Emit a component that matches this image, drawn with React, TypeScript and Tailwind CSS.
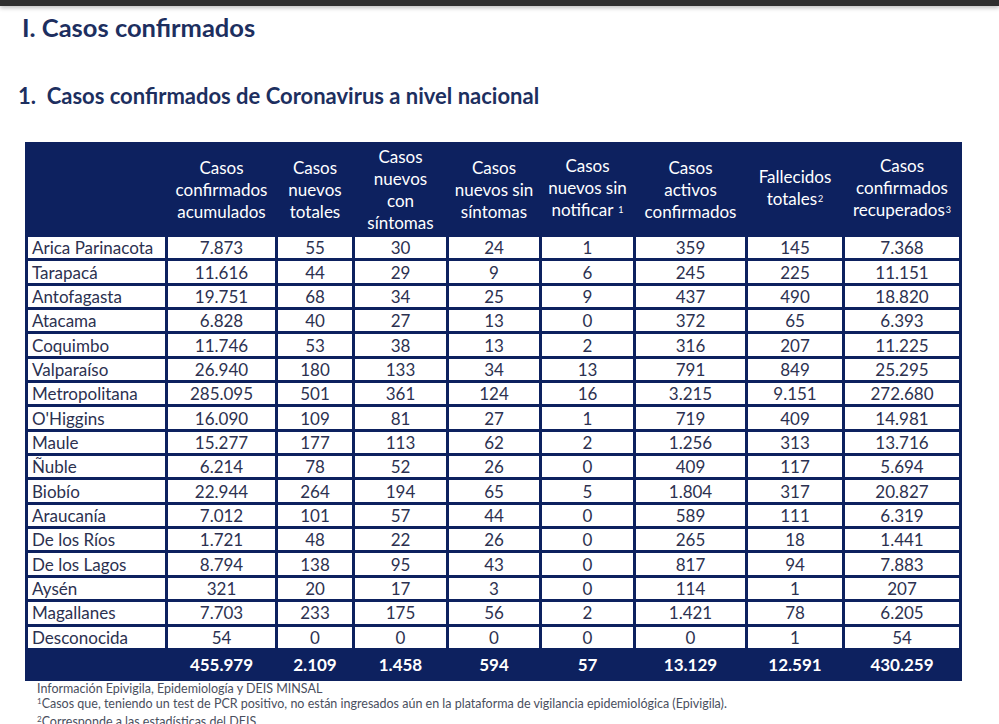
import React from "react";

const rows: [string, string[]][] = [
  ["Arica Parinacota", ["7.873", "55", "30", "24", "1", "359", "145", "7.368"]],
  ["Tarapacá", ["11.616", "44", "29", "9", "6", "245", "225", "11.151"]],
  ["Antofagasta", ["19.751", "68", "34", "25", "9", "437", "490", "18.820"]],
  ["Atacama", ["6.828", "40", "27", "13", "0", "372", "65", "6.393"]],
  ["Coquimbo", ["11.746", "53", "38", "13", "2", "316", "207", "11.225"]],
  ["Valparaíso", ["26.940", "180", "133", "34", "13", "791", "849", "25.295"]],
  ["Metropolitana", ["285.095", "501", "361", "124", "16", "3.215", "9.151", "272.680"]],
  ["O'Higgins", ["16.090", "109", "81", "27", "1", "719", "409", "14.981"]],
  ["Maule", ["15.277", "177", "113", "62", "2", "1.256", "313", "13.716"]],
  ["Ñuble", ["6.214", "78", "52", "26", "0", "409", "117", "5.694"]],
  ["Biobío", ["22.944", "264", "194", "65", "5", "1.804", "317", "20.827"]],
  ["Araucanía", ["7.012", "101", "57", "44", "0", "589", "111", "6.319"]],
  ["De los Ríos", ["1.721", "48", "22", "26", "0", "265", "18", "1.441"]],
  ["De los Lagos", ["8.794", "138", "95", "43", "0", "817", "94", "7.883"]],
  ["Aysén", ["321", "20", "17", "3", "0", "114", "1", "207"]],
  ["Magallanes", ["7.703", "233", "175", "56", "2", "1.421", "78", "6.205"]],
  ["Desconocida", ["54", "0", "0", "0", "0", "0", "1", "54"]],
];

const totals = ["455.979", "2.109", "1.458", "594", "57", "13.129", "12.591", "430.259"];

const Sup = ({ c }: { c: string }) => (
  <span className="text-[9px] relative -top-[3px] ml-[1px]">{c}</span>
);

const headers: React.ReactNode[][] = [
  ["Casos", "confirmados", "acumulados"],
  ["Casos", "nuevos", "totales"],
  ["Casos", "nuevos", "con", "síntomas"],
  ["Casos", "nuevos sin", "síntomas"],
  ["Casos", "nuevos sin", <>notificar <Sup c="1" /></>],
  ["Casos", "activos", "confirmados"],
  ["Fallecidos", <>totales<Sup c="2" /></>],
  ["Casos", "confirmados", <>recuperados<Sup c="3" /></>],
];

export default function App() {
  return (
    <div
      className="w-[999px] h-[724px] overflow-hidden bg-white relative"
      style={{ fontFamily: "Lato, 'Open Sans', sans-serif" }}
    >
      <div className="h-[6px] bg-[#2f2f2f] shadow-[0_2px_4px_rgba(0,0,0,0.25)]" />
      <div className="pl-[22px] pt-[6px] text-[25.5px] leading-[30px] font-bold text-[#1d2f5f]">
        I. Casos confirmados
      </div>
      <div className="pl-[18px] mt-[41px] text-[22px] leading-[26px] font-bold text-[#1d2f5f] whitespace-pre">
        1.  Casos confirmados de Coronavirus a nivel nacional
      </div>
      <div className="ml-[25px] mt-[33px] w-[937px] bg-[#0d215f] p-[3px] grid gap-[3px] grid-cols-[137px_107px_74px_91px_90px_91px_109px_94px_114px] grid-rows-[89px_repeat(17,21.35px)_27px] text-[17px]">
        <div />
        {headers.map((h, i) => (
          <div
            key={i}
            className="flex flex-col items-center justify-center text-white leading-[22px] whitespace-nowrap"
          >
            {h.map((l, j) => (
              <span key={j}>{l}</span>
            ))}
          </div>
        ))}
        {rows.map(([name, vals]) => (
          <React.Fragment key={name}>
            <div className="bg-white text-[#2c3150] pl-[4px] flex items-center leading-none whitespace-nowrap">
              {name}
            </div>
            {vals.map((v, k) => (
              <div
                key={k}
                className="bg-white text-[#2c3150] flex items-center justify-center leading-none"
              >
                {v}
              </div>
            ))}
          </React.Fragment>
        ))}
        <div />
        {totals.map((t, k) => (
          <div key={k} className="flex items-center justify-center text-white font-bold leading-none">
            {t}
          </div>
        ))}
      </div>
      <div className="pl-[37px] text-[12.5px] leading-[15.5px] text-[#4a4f5e]">
        <div>Información Epivigila, Epidemiología y DEIS MINSAL</div>
        <div>
          <span className="text-[8px] relative -top-[4px]">1</span>Casos que, teniendo un test de PCR positivo, no están ingresados aún en la plataforma de vigilancia epidemiológica (Epivigila).
        </div>
        <div>
          <span className="text-[8px] relative -top-[4px]">2</span>Corresponde a las estadísticas del DEIS.
        </div>
      </div>
    </div>
  );
}
